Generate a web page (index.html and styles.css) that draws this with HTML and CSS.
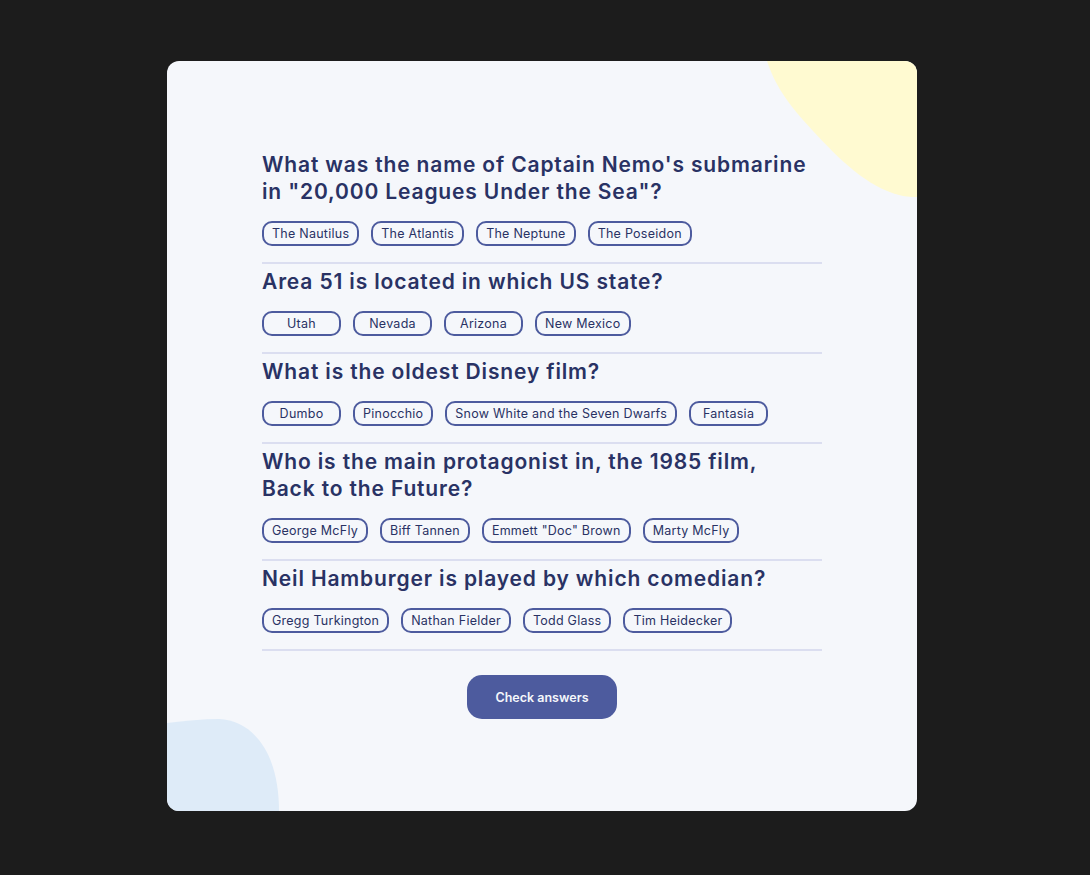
FILE: index.html
```html
<!DOCTYPE html>
<html lang="en">
<head>
<meta charset="utf-8">
<title>Quizzical</title>
<link rel="stylesheet" href="styles.css">
</head>
<body>
<main class="card">
  <svg class="blob blob-yellow" width="150" height="136" viewBox="0 0 150 136" aria-hidden="true">
    <path d="M0 0 C8 24 20 42 46 70 C72 98 100 126 132 134 C140 136 146 136 150 136 L150 0 Z" fill="#FFFAD1"/>
  </svg>
  <svg class="blob blob-blue" width="114" height="92" viewBox="0 0 114 92" aria-hidden="true">
    <path d="M0 4 C18 2 36 0 52 0 C88 2 112 36 112 92 L0 92 Z" fill="#DEEBF8"/>
  </svg>
  <section class="quiz">
    <div class="question">
      <h2 class="q-title">What was the name of Captain Nemo's submarine in "20,000 Leagues Under the Sea"?</h2>
      <div class="options">
        <span class="option">The Nautilus</span>
        <span class="option">The Atlantis</span>
        <span class="option">The Neptune</span>
        <span class="option">The Poseidon</span>
      </div>
      <hr class="divider">
    </div>
    <div class="question">
      <h2 class="q-title">Area 51 is located in which US state?</h2>
      <div class="options">
        <span class="option">Utah</span>
        <span class="option">Nevada</span>
        <span class="option">Arizona</span>
        <span class="option">New Mexico</span>
      </div>
      <hr class="divider">
    </div>
    <div class="question">
      <h2 class="q-title">What is the oldest Disney film?</h2>
      <div class="options">
        <span class="option">Dumbo</span>
        <span class="option">Pinocchio</span>
        <span class="option">Snow White and the Seven Dwarfs</span>
        <span class="option">Fantasia</span>
      </div>
      <hr class="divider">
    </div>
    <div class="question">
      <h2 class="q-title">Who is the main protagonist in, the 1985 film, Back to the Future?</h2>
      <div class="options">
        <span class="option">George McFly</span>
        <span class="option">Biff Tannen</span>
        <span class="option">Emmett "Doc" Brown</span>
        <span class="option">Marty McFly</span>
      </div>
      <hr class="divider">
    </div>
    <div class="question">
      <h2 class="q-title">Neil Hamburger is played by which comedian?</h2>
      <div class="options">
        <span class="option">Gregg Turkington</span>
        <span class="option">Nathan Fielder</span>
        <span class="option">Todd Glass</span>
        <span class="option">Tim Heidecker</span>
      </div>
      <hr class="divider">
    </div>
    <div class="actions">
      <button class="check-btn">Check answers</button>
    </div>
  </section>
</main>
</body>
</html>
```
FILE: styles.css
```css
* { box-sizing: border-box; }
html, body { margin: 0; padding: 0; }
body {
  background: #1c1c1c;
  font-family: "Inter", "Liberation Sans", sans-serif;
  min-height: 875px;
  padding-top: 61px;
  padding-left: 167px;
}
.card {
  position: relative;
  width: 750px;
  height: 750px;
  background: #F5F7FB;
  border-radius: 12px;
  overflow: hidden;
}
.blob { position: absolute; display: block; }
.blob-yellow { top: 0; right: 0; }
.blob-blue { left: 0; bottom: 0; }
.quiz {
  position: relative;
  width: 560px;
  margin: 0 auto;
  padding-top: 90px;
}
.q-title {
  margin: 0;
  max-width: 551px;
  font-size: 21px;
  line-height: 27px;
  font-weight: 600;
  letter-spacing: 0.85px;
  color: #293264;
}
.options {
  display: flex;
  flex-wrap: wrap;
  gap: 12px;
  margin-top: 16px;
}
.option {
  min-width: 79px;
  height: 25px;
  padding: 0 8px;
  border: 2px solid #4D5B9E;
  border-radius: 10px;
  font-size: 12.5px;
  letter-spacing: 0.25px;
  line-height: 21px;
  color: #293264;
  text-align: center;
}
.divider {
  border: 0;
  border-top: 2px solid #DBDEF0;
  margin: 16px 0 4px;
  height: 0;
}
.actions {
  display: flex;
  justify-content: center;
  margin-top: 24px;
}
.check-btn {
  width: 150px;
  height: 44px;
  border: 0;
  border-radius: 15px;
  background: #4D5B9E;
  color: #F5F7FB;
  font-family: "Inter", "Liberation Sans", sans-serif;
  font-size: 12.5px;
  font-weight: 600;
}
```
